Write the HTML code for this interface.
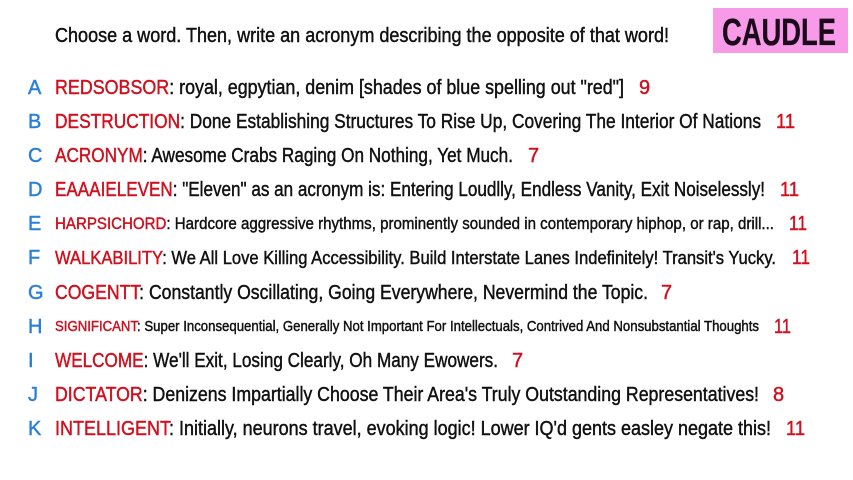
<!DOCTYPE html>
<html><head><meta charset="utf-8"><style>
html,body{margin:0;padding:0;background:#fff;width:853px;height:480px;overflow:hidden}
svg{display:block}
text{font-family:"Liberation Sans Narrow","Liberation Sans",sans-serif;fill:#111;stroke:#111;stroke-width:0.45}
.r{fill:#d0101e;stroke:#d0101e}.b{fill:#2a7fd8;stroke:#2a7fd8}
</style></head><body>
<svg width="853" height="480" viewBox="0 0 853 480">
<rect x="713" y="8" width="135" height="45" fill="#f79ae8"/>
<text x="722" y="45" font-size="38" font-weight="bold" textLength="114" lengthAdjust="spacingAndGlyphs" style="fill:#1a0a1a;stroke:#1a0a1a;stroke-width:0.3">CAUDLE</text>
<text x="55" y="42" font-size="20" textLength="614" lengthAdjust="spacingAndGlyphs">Choose a word. Then, write an acronym describing the opposite of that word!</text>
<g font-size="20">
<text class="b" x="28" y="94">A</text>
<text x="55" y="94" textLength="569" lengthAdjust="spacingAndGlyphs"><tspan class="r">REDSOBSOR</tspan>:  royal, egpytian, denim [shades of blue spelling out "red"]</text>
<text class="r" x="639" y="94">9</text>
<text class="b" x="28" y="128">B</text>
<text x="55" y="128" textLength="706" lengthAdjust="spacingAndGlyphs"><tspan class="r">DESTRUCTION</tspan>:  Done Establishing Structures To Rise Up, Covering The Interior Of Nations</text>
<text class="r" x="776" y="128" textLength="19" lengthAdjust="spacingAndGlyphs">11</text>
<text class="b" x="28" y="162">C</text>
<text x="55" y="162" textLength="458" lengthAdjust="spacingAndGlyphs"><tspan class="r">ACRONYM</tspan>:  Awesome Crabs Raging On Nothing, Yet Much.</text>
<text class="r" x="528" y="162">7</text>
<text class="b" x="28" y="196">D</text>
<text x="55" y="196" textLength="710" lengthAdjust="spacingAndGlyphs"><tspan class="r">EAAAIELEVEN</tspan>:  "Eleven" as an acronym is: Entering Loudlly, Endless Vanity, Exit Noiselessly!</text>
<text class="r" x="780" y="196" textLength="19" lengthAdjust="spacingAndGlyphs">11</text>
<text class="b" x="28" y="230">E</text>
<text x="55" y="229" font-size="17" textLength="719" lengthAdjust="spacingAndGlyphs"><tspan class="r">HARPSICHORD</tspan>:  Hardcore aggressive rhythms, prominently sounded in contemporary hiphop, or rap, drill...</text>
<text class="r" x="789" y="230" textLength="18" lengthAdjust="spacingAndGlyphs">11</text>
<text class="b" x="28" y="264">F</text>
<text x="55" y="264" font-size="18" textLength="721" lengthAdjust="spacingAndGlyphs"><tspan class="r">WALKABILITY</tspan>:  We All Love Killing Accessibility. Build Interstate Lanes Indefinitely! Transit's Yucky.</text>
<text class="r" x="792" y="264" textLength="18" lengthAdjust="spacingAndGlyphs">11</text>
<text class="b" x="28" y="299">G</text>
<text x="55" y="299" textLength="593" lengthAdjust="spacingAndGlyphs"><tspan class="r">COGENTT</tspan>:  Constantly Oscillating, Going Everywhere, Nevermind the Topic.</text>
<text class="r" x="661" y="299">7</text>
<text class="b" x="28" y="333">H</text>
<text x="55" y="331" font-size="15" textLength="704" lengthAdjust="spacingAndGlyphs"><tspan class="r">SIGNIFICANT</tspan>:  Super Inconsequential, Generally Not Important For Intellectuals, Contrived And Nonsubstantial Thoughts</text>
<text class="r" x="774" y="333" textLength="17" lengthAdjust="spacingAndGlyphs">11</text>
<text class="b" x="28" y="367">I</text>
<text x="55" y="367" textLength="443" lengthAdjust="spacingAndGlyphs"><tspan class="r">WELCOME</tspan>:  We'll Exit, Losing Clearly, Oh Many Ewowers.</text>
<text class="r" x="512" y="367">7</text>
<text class="b" x="28" y="401">J</text>
<text x="55" y="401" textLength="704" lengthAdjust="spacingAndGlyphs"><tspan class="r">DICTATOR</tspan>:  Denizens Impartially Choose Their Area's Truly Outstanding Representatives!</text>
<text class="r" x="773" y="401">8</text>
<text class="b" x="28" y="435">K</text>
<text x="55" y="435" textLength="716" lengthAdjust="spacingAndGlyphs"><tspan class="r">INTELLIGENT</tspan>:  Initially, neurons travel, evoking logic! Lower IQ'd gents easley negate this!</text>
<text class="r" x="786" y="435" textLength="19" lengthAdjust="spacingAndGlyphs">11</text>
</g>
</svg>
</body></html>
